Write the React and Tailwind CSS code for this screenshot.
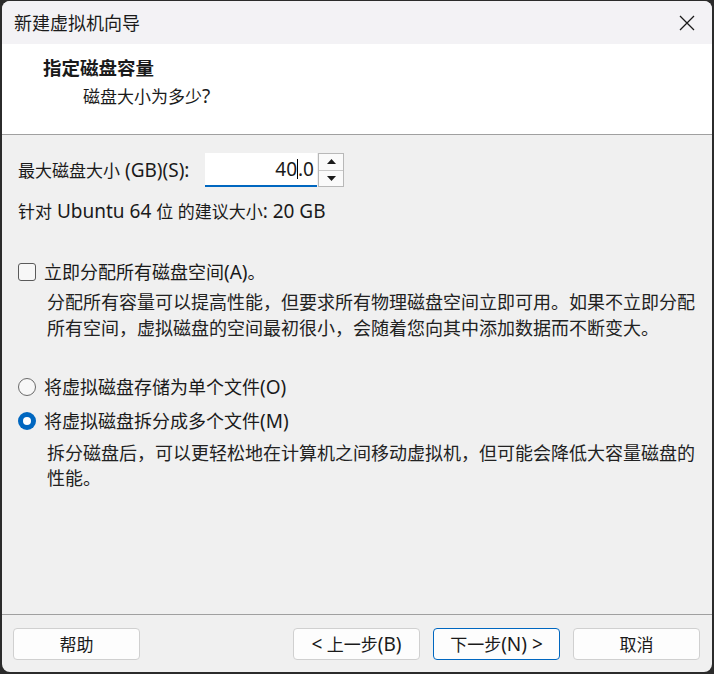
const FONT = { fontFamily: '"Noto Sans", "Noto Sans CJK SC", sans-serif' }

// Latin runs are a touch larger than the CJK glyphs in the original
function L({ children }) {
  return <span className="text-[19px]">{children}</span>
}

function Checkbox() {
  return <span className="w-[18px] h-[18px] rounded-[3px] border border-[#5a5a5a] bg-[#f7f7f7] shrink-0" />
}

function Radio({ checked }) {
  if (checked) {
    return (
      <span className="w-[18px] h-[18px] rounded-full bg-[#0067c0] flex items-center justify-center shrink-0">
        <span className="w-[8px] h-[8px] rounded-full bg-white" />
      </span>
    )
  }
  return <span className="w-[18px] h-[18px] rounded-full border border-[#6a6a6a] bg-[#f7f7f7] shrink-0" />
}

function Button({ children, primary }) {
  return (
    <button
      className={`w-[127px] h-[32px] rounded-[4px] bg-[#fdfdfd] text-[17px] leading-none text-[#1a1a1a] border flex items-center justify-center ${
        primary ? 'border-[#0067c0]' : 'border-[#d0d0d0]'
      }`}
    >
      {children}
    </button>
  )
}

export default function App() {
  return (
    <div className="w-[714px] h-[674px] bg-[#2b2b2b] pt-[1px] px-[2px] pb-[2px]" style={FONT}>
      <div className="h-full rounded-[8px] overflow-hidden flex flex-col bg-[#f0f0f0] text-[#1a1a1a]">
        {/* title bar */}
        <div className="h-[43px] bg-[#f3f2f5] flex items-center justify-between pl-[12px] pr-[17px] shrink-0">
          <span className="text-[18px] leading-none">新建虚拟机向导</span>
          <svg width="16" height="16" viewBox="0 0 16 16" className="text-[#1a1a1a]">
            <path d="M1 1 L15 15 M15 1 L1 15" stroke="currentColor" strokeWidth="1.3" fill="none" />
          </svg>
        </div>

        {/* header */}
        <div className="h-[91px] bg-white border-b border-[#a0a0a0] pt-[11px] shrink-0">
          <div className="pl-[41px] text-[18.5px] font-bold leading-[26px]">指定磁盘容量</div>
          <div className="pl-[81px] text-[17px] leading-[28px] mt-[1px]">磁盘大小为多少<L>?</L></div>
        </div>

        {/* body */}
        <div className="flex-1 flex flex-col pl-[16px] pr-[16px]">
          <div className="flex items-center h-[34px] mt-[18px]">
            <span className="text-[17px] w-[187px] whitespace-nowrap">最大磁盘大小<L> (GB)(S):</L></span>
            <div className="w-[112px] h-[34px] bg-white border-b-2 border-[#0067c0] flex items-center justify-end pr-[3px] text-[19px]">
              <span>40</span>
              <span className="w-[1px] h-[20px] bg-black" />
              <span>.0</span>
            </div>
            <div className="w-[26px] h-[34px] border border-[#b8b8b8] bg-[#f0f0f0] flex flex-col ml-[1px]">
              <div className="flex-1 flex items-center justify-center border-b border-[#c8c8c8] bg-[#fafafa]">
                <svg width="9" height="5" viewBox="0 0 9 5"><path d="M4.5 0 L9 5 L0 5 Z" fill="#1a1a1a" /></svg>
              </div>
              <div className="flex-1 flex items-center justify-center bg-[#fafafa]">
                <svg width="9" height="5" viewBox="0 0 9 5"><path d="M0 0 L9 0 L4.5 5 Z" fill="#1a1a1a" /></svg>
              </div>
            </div>
          </div>

          <div className="text-[17px] leading-[24px] mt-[12px]">
            针对<L> Ubuntu 64 </L>位 的建议大小<L>: 20 GB</L>
          </div>

          <div className="flex items-center gap-[8px] h-[24px] mt-[36px]">
            <Checkbox />
            <span className="text-[18px]">立即分配所有磁盘空间<L>(A)</L>。</span>
          </div>
          <div className="pl-[29px] text-[18px] leading-[26px] mt-[5px] text-[#222]">
            <div>分配所有容量可以提高性能，但要求所有物理磁盘空间立即可用。如果不立即分配</div>
            <div>所有空间，虚拟磁盘的空间最初很小，会随着您向其中添加数据而不断变大。</div>
          </div>

          <div className="flex items-center gap-[8px] h-[24px] mt-[34px]">
            <Radio />
            <span className="text-[18px]">将虚拟磁盘存储为单个文件<L>(O)</L></span>
          </div>
          <div className="flex items-center gap-[8px] h-[24px] mt-[10px]">
            <Radio checked />
            <span className="text-[18px]">将虚拟磁盘拆分成多个文件<L>(M)</L></span>
          </div>
          <div className="pl-[29px] text-[18px] leading-[25px] mt-[8px] text-[#222]">
            <div>拆分磁盘后，可以更轻松地在计算机之间移动虚拟机，但可能会降低大容量磁盘的</div>
            <div>性能。</div>
          </div>
        </div>

        {/* footer */}
        <div className="border-t border-[#a0a0a0] pt-[13px] pb-[12px] pl-[11px] pr-[12px] flex items-center shrink-0">
          <Button>帮助</Button>
          <div className="flex-1" />
          <div className="flex gap-[13px]">
            <Button><L>&lt;</L>&nbsp;上一步<L>(B)</L></Button>
            <Button primary>下一步<L>(N) &gt;</L></Button>
            <Button>取消</Button>
          </div>
        </div>
      </div>
    </div>
  )
}
